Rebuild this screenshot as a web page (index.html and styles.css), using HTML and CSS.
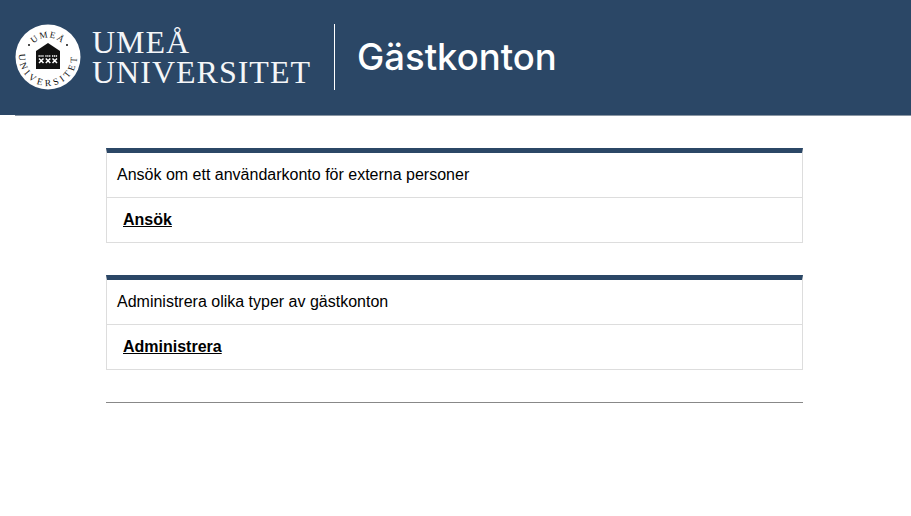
FILE: index.html
```html
<!DOCTYPE html>
<html lang="sv">
<head>
<meta charset="utf-8">
<title>Gästkonton</title>
<link rel="stylesheet" href="styles.css">
</head>
<body>
<header class="site-header">
  <div class="brand">
    <svg class="seal" viewBox="0 0 66 66" width="66" height="66" aria-hidden="true">
      <defs>
        <path id="arc-top" d="M13.500 33A19.500 19.500 0 0 1 52.500 33"/>
        <path id="arc-bottom" d="M5.750 23.100A29 29 0 1 0 60.250 23.100"/>
      </defs>
      <circle cx="33" cy="33" r="32.500" fill="#fff"/>
      <text class="seal-text seal-top"><textPath href="#arc-top" startOffset="50%" text-anchor="middle">UMEÅ</textPath></text>
      <text class="seal-text seal-bottom"><textPath href="#arc-bottom" startOffset="50%" text-anchor="middle">UNIVERSITET</textPath></text>
      <circle cx="14" cy="21" r="1" fill="#111"/>
      <circle cx="52" cy="21" r="1" fill="#111"/>
      <path d="M33 19L45 27H21Z" fill="#111"/>
      <rect x="21" y="27" width="24" height="18" fill="#111"/>
      <g fill="none" stroke="#fff" stroke-width="1.500">
        <path d="M23.500 32h5.500M30.300 32h5.500M37 32h5.500" stroke-dasharray="1.300 .6"/>
        <path d="M24 34.500l4.500 4.500M28.500 34.500l-4.500 4.500M30.800 34.500l4.500 4.500M35.300 34.500l-4.500 4.500M37.500 34.500l4.500 4.500M42 34.500l-4.500 4.500"/>
      </g>
    </svg>
    <div class="wordmark">
      <span>UMEÅ</span>
      <span>UNIVERSITET</span>
    </div>
  </div>
  <h1 class="app-title">Gästkonton</h1>
</header>
<div class="header-rule"></div>
<main class="content">
  <section class="card">
    <p class="card-text">Ansök om ett användarkonto för externa personer</p>
    <p class="card-action"><a href="#">Ansök</a></p>
  </section>
  <section class="card">
    <p class="card-text">Administrera olika typer av gästkonton</p>
    <p class="card-action"><a href="#">Administrera</a></p>
  </section>
  <hr class="rule">
</main>
</body>
</html>
```
FILE: styles.css
```css
* { box-sizing: border-box; }

body {
  margin: 0;
  background: #fff;
  color: #000;
  font-family: "Liberation Sans", Arial, sans-serif;
  font-size: 16px;
}

.site-header {
  display: flex;
  align-items: center;
  height: 115px;
  padding: 0 0 2px 15px;
  background: #2b4766;
}

.header-rule {
  height: 1px;
  margin-left: 15px;
  background: #8a96a3;
}

.brand {
  display: flex;
  align-items: center;
  gap: 11px;
  height: 66px;
  padding-right: 23px;
  border-right: 1px solid #fff;
}

.seal { display: block; flex: none; }

.seal-text {
  font-family: "Liberation Serif", serif;
  fill: #111;
}

.seal-top { font-size: 9px; letter-spacing: 1.500px; }

.seal-bottom { font-size: 9.500px; letter-spacing: 3.200px; }

.wordmark {
  display: flex;
  flex-direction: column;
  color: #f4f6f8;
  font-family: "Liberation Serif", serif;
  font-size: 32px;
  letter-spacing: 1px;
  line-height: 30px;
}

.app-title {
  margin: 2px 0 0 22px;
  color: #fff;
  font-family: "Inter", sans-serif;
  font-size: 36.500px;
  font-weight: 500;
  line-height: 1;
}

.content {
  display: flex;
  flex-direction: column;
  gap: 32px;
  width: 697px;
  margin: 32px 0 0 106px;
}

.card {
  border: 1px solid #ddd;
  border-top: 5px solid #2b4766;
}

.card p { margin: 0; }

.card-text {
  height: 45px;
  padding: 13px 10px 0;
  line-height: 18px;
  border-bottom: 1px solid #ddd;
}

.card-action {
  height: 44px;
  padding: 13px 16px 0;
  line-height: 18px;
  font-weight: 700;
}

.card-action a { color: #000; text-decoration: underline; }

.rule {
  width: 100%;
  height: 1px;
  margin: 0;
  border: 0;
  background: #888;
}
```
